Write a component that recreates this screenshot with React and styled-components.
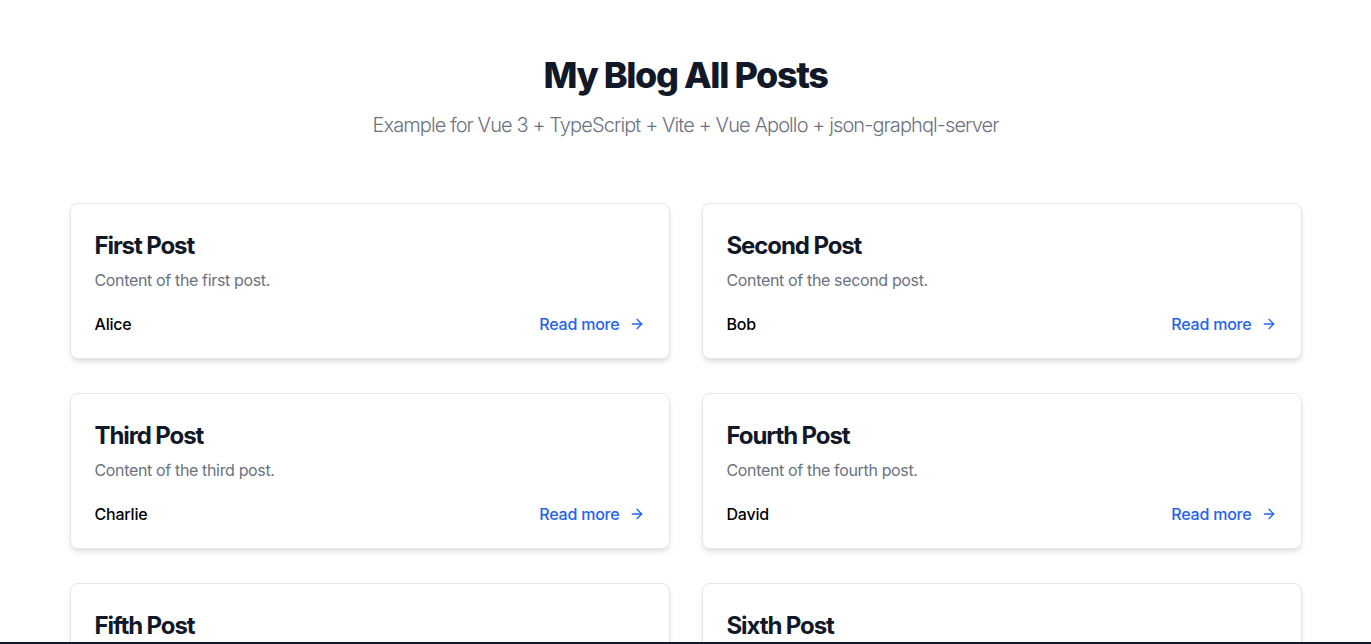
import React from "react";
import styled, { createGlobalStyle } from "styled-components";
import { ArrowRight } from "lucide-react";

const GlobalStyle = createGlobalStyle`
  * {
    box-sizing: border-box;
  }
  body {
    margin: 0;
    background: #fff;
    font-family: Inter, "Noto Sans", "Liberation Sans", sans-serif;
    color: #111827;
  }
`;

const Page = styled.div`
  max-width: 1280px;
  margin: 0 auto;
  padding: 55px 24px 48px;
`;

const Header = styled.header`
  text-align: center;
  margin-bottom: 64px;

  h1 {
    font-size: 36px;
    line-height: 40px;
    font-weight: 800;
    letter-spacing: -1.4px;
    margin: 0 0 16px;
    color: #111827;
  }
  p {
    font-size: 20px;
    line-height: 28px;
    font-weight: 300;
    letter-spacing: -0.9px;
    margin: 0;
    color: #6b7280;
  }
`;

const Grid = styled.div`
  display: grid;
  grid-template-columns: repeat(2, 1fr);
  gap: 34px 32px;
`;

const Card = styled.article`
  background: #fff;
  border: 1px solid #e5e7eb;
  border-radius: 8px;
  box-shadow: 0 4px 6px -1px rgba(0, 0, 0, 0.1), 0 2px 4px -2px rgba(0, 0, 0, 0.1);
  padding: 26px 24px 22px;

  h2 {
    font-size: 24px;
    line-height: 32px;
    font-weight: 700;
    letter-spacing: -1.1px;
    margin: 0 0 6px;
    color: #111827;
  }
  p {
    font-size: 16px;
    line-height: 24px;
    letter-spacing: -0.35px;
    margin: 0;
    color: #6b7280;
  }
`;

const Meta = styled.div`
  display: flex;
  justify-content: space-between;
  align-items: center;
  margin-top: 20px;
  height: 24px;
  font-size: 16px;
  letter-spacing: -0.2px;
`;

const Author = styled.span`
  font-weight: 500;
  color: #000;
`;

const ReadMore = styled.a`
  display: inline-flex;
  align-items: center;
  gap: 9px;
  color: #2563eb;
  font-weight: 500;
  text-decoration: none;
  cursor: pointer;
`;

const FooterEdge = styled.div`
  position: fixed;
  left: 0;
  right: 0;
  bottom: 0;
  height: 2px;
  background: #111827;
`;

const posts = [
  { title: "First Post", content: "Content of the first post.", author: "Alice" },
  { title: "Second Post", content: "Content of the second post.", author: "Bob" },
  { title: "Third Post", content: "Content of the third post.", author: "Charlie" },
  { title: "Fourth Post", content: "Content of the fourth post.", author: "David" },
  { title: "Fifth Post", content: "Content of the fifth post.", author: "Eve" },
  { title: "Sixth Post", content: "Content of the sixth post.", author: "Frank" },
];

export default function App() {
  return (
    <>
      <GlobalStyle />
      <Page>
        <Header>
          <h1>My Blog All Posts</h1>
          <p>Example for Vue 3 + TypeScript + Vite + Vue Apollo + json-graphql-server</p>
        </Header>
        <Grid>
          {posts.map((post) => (
            <Card key={post.title}>
              <h2>{post.title}</h2>
              <p>{post.content}</p>
              <Meta>
                <Author>{post.author}</Author>
                <ReadMore>
                  Read more <ArrowRight size={16} strokeWidth={2} />
                </ReadMore>
              </Meta>
            </Card>
          ))}
        </Grid>
      </Page>
      <FooterEdge />
    </>
  );
}
